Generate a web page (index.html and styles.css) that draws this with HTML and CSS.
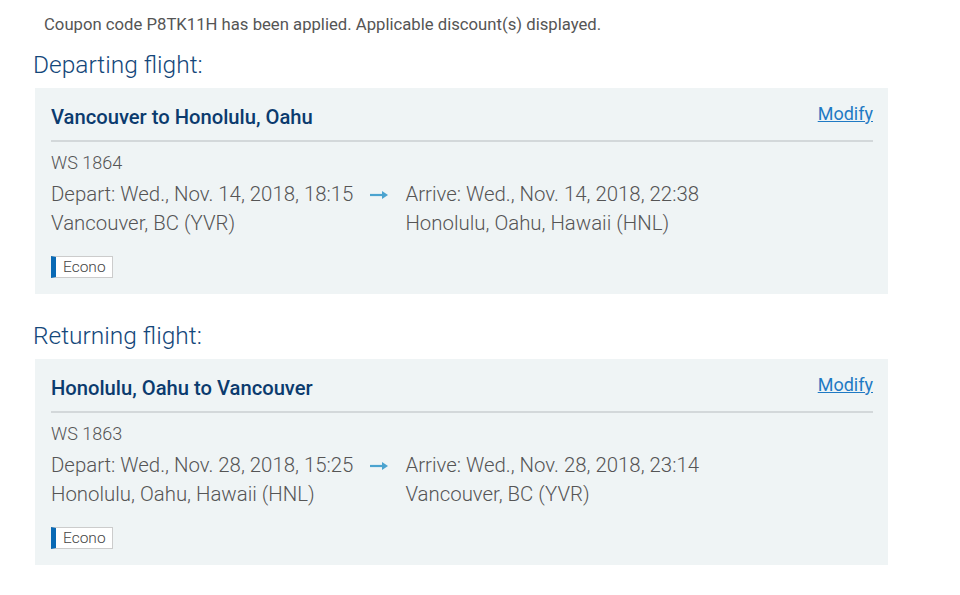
FILE: index.html
```html
<!DOCTYPE html>
<html lang="en">
<head>
    <meta charset="UTF-8">
    <meta name="viewport" content="width=device-width, initial-scale=1.0">
    <title>Flight summary</title>
    <link rel="stylesheet" href="styles.css">
</head>
<body>
    <div class="container">
        <p class="coupon">Coupon code P8TK11H has been applied. Applicable discount(s) displayed.</p>

        <h2 class="section-title">Departing flight:</h2>
        <div class="flight-card">
            <div class="flight-head">
                <h3>Vancouver to Honolulu, Oahu</h3>
                <a href="#" class="modify">Modify</a>
            </div>
            <div class="flight-no">WS 1864</div>
            <div class="flight-times">
                <div>
                    <div>Depart: Wed., Nov. 14, 2018, 18:15</div>
                    <div>Vancouver, BC (YVR)</div>
                </div>
                <svg class="arrow" width="18" height="10" viewBox="0 0 18 10"><path d="M0 5h13" stroke="#4ba3cf" stroke-width="2.2"/><path d="M12 1l6 4-6 4z" fill="#4ba3cf"/></svg>
                <div>
                    <div>Arrive: Wed., Nov. 14, 2018, 22:38</div>
                    <div>Honolulu, Oahu, Hawaii (HNL)</div>
                </div>
            </div>
            <span class="fare">Econo</span>
        </div>

        <h2 class="section-title">Returning flight:</h2>
        <div class="flight-card">
            <div class="flight-head">
                <h3>Honolulu, Oahu to Vancouver</h3>
                <a href="#" class="modify">Modify</a>
            </div>
            <div class="flight-no">WS 1863</div>
            <div class="flight-times">
                <div>
                    <div>Depart: Wed., Nov. 28, 2018, 15:25</div>
                    <div>Honolulu, Oahu, Hawaii (HNL)</div>
                </div>
                <svg class="arrow" width="18" height="10" viewBox="0 0 18 10"><path d="M0 5h13" stroke="#4ba3cf" stroke-width="2.2"/><path d="M12 1l6 4-6 4z" fill="#4ba3cf"/></svg>
                <div>
                    <div>Arrive: Wed., Nov. 28, 2018, 23:14</div>
                    <div>Vancouver, BC (YVR)</div>
                </div>
            </div>
            <span class="fare">Econo</span>
        </div>
    </div>
</body>
</html>
```

FILE: styles.css
```css
body {
    margin: 0;
    font-family: Roboto, "Liberation Sans", Arial, sans-serif;
    background: white;
    color: #666;
}
.container {
    padding: 15px 0 0 33px;
    width: 855px;
}
.coupon {
    margin: 0 0 0 11px;
    font-size: 16.7px;
    line-height: 20px;
    color: #555;
}
.section-title {
    margin: 15px 0 8px;
    font-size: 24.5px;
    font-weight: 300;
    line-height: 30px;
    color: #14477a;
}
.flight-card + .section-title {
    margin-top: 27px;
}
.flight-card {
    margin-left: 2px;
    background-color: #eff4f5;
    padding: 16px 15px 16px 16px;
}
.flight-head {
    display: flex;
    justify-content: space-between;
    align-items: flex-start;
    padding-bottom: 10px;
    border-bottom: 2px solid #d3d8da;
}
.flight-head h3 {
    margin: 0;
    font-size: 20.2px;
    font-weight: 500;
    line-height: 26px;
    color: #0b3b6e;
}
.modify {
    font-size: 18px;
    line-height: 20px;
    color: #1f7ac4;
}
.flight-no {
    margin-top: 10px;
    font-size: 18px;
    font-weight: 300;
    line-height: 22px;
    color: #555;
}
.flight-times {
    display: grid;
    grid-template-columns: auto 18px auto;
    column-gap: 17px;
    justify-content: start;
    align-items: start;
    margin-top: 6px;
    font-size: 20.4px;
    font-weight: 300;
    line-height: 29px;
    color: #555;
}
.arrow {
    margin-top: 10px;
}
.fare {
    display: inline-block;
    margin-top: 18px;
    padding: 0 6px 0 7px;
    font-size: 15.5px;
    font-weight: 300;
    line-height: 20px;
    color: #444;
    background: white;
    border: 1px solid #ccc;
    border-left: 5px solid #0a6ab5;
}
```
